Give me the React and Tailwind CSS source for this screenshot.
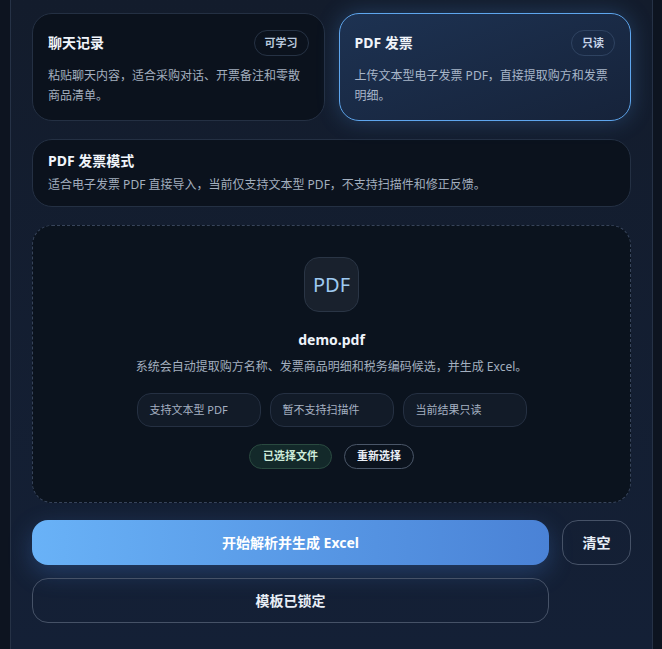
export default function App() {
  const font = { fontFamily: '"Noto Sans", "Noto Sans CJK SC", sans-serif' };
  return (
    <div className="h-[649px] w-[662px] overflow-hidden bg-[#0d1420]" style={font}>
      <div className="ml-[10px] h-[649px] w-[643px] border-x border-[#263246] bg-gradient-to-b from-[#131c2c] to-[#142036] px-[21px] pt-[13px]">
        {/* source cards */}
        <div className="grid grid-cols-2 gap-[14px]">
          <div className="h-[108px] rounded-[20px] border border-[#243043] bg-[#0b121d] px-[15px] pt-[16px]">
            <div className="flex h-[26px] items-center justify-between">
              <span className="text-[14px] font-bold leading-[20px] text-[#f1f5fb]">聊天记录</span>
              <span className="flex h-[26px] items-center rounded-full border border-[#263244] px-[10px] text-[11px] font-semibold text-[#b9c9de]">可学习</span>
            </div>
            <p className="mt-[10px] text-[12px] leading-[20px] text-[#a3afbf]">粘贴聊天内容，适合采购对话、开票备注和零散商品清单。</p>
          </div>
          <div className="h-[108px] rounded-[20px] border border-[#5ea6ee] bg-gradient-to-br from-[#1d3252] to-[#16233a] px-[15px] pt-[16px] shadow-[0_0_22px_rgba(80,150,235,0.28)]">
            <div className="flex h-[26px] items-center justify-between">
              <span className="text-[14px] font-bold leading-[20px] text-[#f1f5fb]">PDF 发票</span>
              <span className="flex h-[26px] items-center rounded-full border border-[#2f4361] px-[10px] text-[11px] font-semibold text-[#c8d6ea]">只读</span>
            </div>
            <p className="mt-[10px] text-[12px] leading-[20px] text-[#a8b6c9]">上传文本型电子发票 PDF，直接提取购方和发票明细。</p>
          </div>
        </div>

        {/* mode */}
        <div className="mt-[18px] h-[68px] rounded-[20px] border border-[#243043] bg-[#0b121d] px-[15px] pt-[11px]">
          <div className="text-[14px] font-bold leading-[20px] text-[#f1f5fb]">PDF 发票模式</div>
          <div className="mt-[4px] text-[12px] leading-[20px] text-[#a3afbf]">适合电子发票 PDF 直接导入，当前仅支持文本型 PDF，不支持扫描件和修正反馈。</div>
        </div>

        {/* dropzone */}
        <div className="mt-[18px] flex h-[278px] flex-col items-center rounded-[20px] border border-dashed border-[#37445a] bg-[#0b131e] pt-[31px]">
          <div className="flex h-[55px] w-[55px] items-center justify-center rounded-[15px] border border-[#2a3545] bg-[#19212d] text-[20px] text-[#9fcaf1]">PDF</div>
          <div className="mt-[18px] text-[14px] font-bold leading-[20px] text-[#eef3fa]">demo.pdf</div>
          <div className="mt-[7px] text-[12px] leading-[20px] text-[#a3afbf]">系统会自动提取购方名称、发票商品明细和税务编码候选，并生成 Excel。</div>
          <div className="mt-[16px] flex gap-[9px]">
            {['支持文本型 PDF', '暂不支持扫描件', '当前结果只读'].map((t) => (
              <div key={t} className="flex h-[34px] w-[124px] items-center rounded-[14px] border border-[#253042] bg-[#121b28] px-[12px] text-[11px] text-[#a5b1c2]">{t}</div>
            ))}
          </div>
          <div className="mt-[17px] flex gap-[12px]">
            <span className="flex h-[25px] items-center rounded-full border border-[#2a4a40] bg-[#13292a] px-[13px] text-[11px] font-semibold text-[#cdebd9]">已选择文件</span>
            <span className="flex h-[25px] items-center rounded-full border border-[#4a5668] px-[12px] text-[11px] font-semibold text-[#e9eef6]">重新选择</span>
          </div>
        </div>

        {/* actions */}
        <div className="mt-[17px] grid grid-cols-[1fr_69px] gap-[13px]">
          <button className="h-[45px] rounded-[16px] bg-gradient-to-r from-[#69b2f7] to-[#4a82d6] text-[14px] font-bold text-white shadow-[0_8px_24px_rgba(70,130,220,0.3)]">开始解析并生成 Excel</button>
          <button className="h-[45px] rounded-[16px] border border-[#465267] text-[14px] font-bold text-[#e8eef6]">清空</button>
          <button className="h-[45px] rounded-[16px] border border-[#465267] text-[14px] font-bold text-[#e8eef6]">模板已锁定</button>
        </div>
      </div>
    </div>
  );
}
